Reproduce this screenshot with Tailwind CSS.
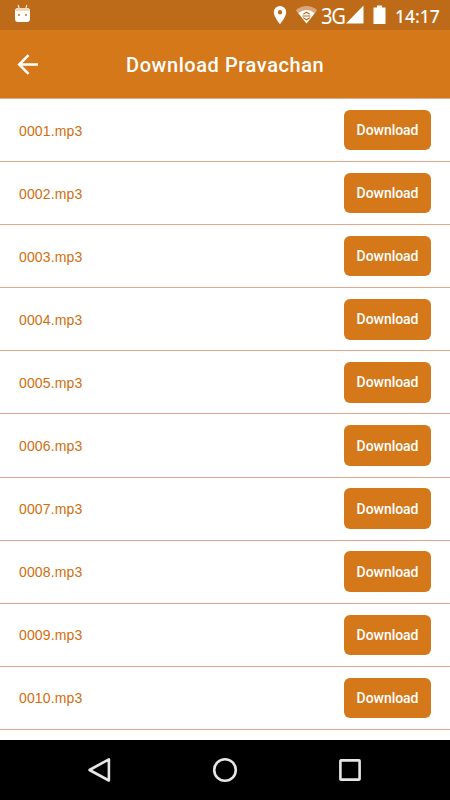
<!DOCTYPE html>
<html lang="en">
<head>
<meta charset="utf-8">
<title>Download Pravachan</title>
<script src="https://cdn.jsdelivr.net/npm/@tailwindcss/browser@4"></script>
</head>
<body class="bg-white">
<div class="flex h-[800px] w-[450px] flex-col overflow-hidden font-[Roboto,sans-serif]">
  <div class="flex h-[30px] shrink-0 items-center bg-[#bd6b18] font-['Noto_Sans',sans-serif] text-white">
    <svg class="ml-[14px] h-[30px] w-[17px]" viewBox="0 0 17 30" fill="#fff">
      <path d="M4.200 5l1 4M12.800 5l-1 4" stroke="#f7e5d5" stroke-width="1.200"/>
      <path d="M1 11Q1 8 4 8h9q3 0 3 3v8q0 3-3 3H4q-3 0-3-3z"/>
      <path d="M1.500 11Q2 8 4 8h9q2 0 2.500 3z" fill="#f3d6bd"/>
      <path d="M4 14h2v2H4zM11 14h2v2h-2z" fill="#d9945a"/>
    </svg>
    <svg class="ml-[242px] h-[30px] w-[14px]" viewBox="0 0 14 30" fill="#fff"><path fill-rule="evenodd" d="M7 6a6.200 6.200 0 0 0-6.200 6.200C.8 17 7 24 7 24s6.200-7 6.200-11.800A6.200 6.200 0 0 0 7 6zm0 4a2.200 2.200 0 1 1 0 4.400A2.200 2.200 0 0 1 7 10z"/></svg>
    <svg class="ml-[8px] h-[30px] w-[23px]" viewBox="0 0 23 30">
      <path d="M.8 10.200Q11.500 2 22.200 10.200L11.500 23.500z" fill="#d9a77a"/>
      <path d="M3.200 13Q11.500 7 19.800 13L11.500 23.500z" fill="#fff"/>
      <path d="M8.300 14.200l3.200-2 3.200 2M8.300 17.800l3.200 2 3.200-2M7.500 16h8" fill="none" stroke="#bd6b18" stroke-width="1.100"/>
    </svg>
    <span class="ml-[3px] w-[24px] origin-left scale-x-[.92] whitespace-nowrap text-[22px] leading-[28px] tracking-[-1.500px]">3G</span>
    <svg class="ml-[1px] h-[30px] w-[18px]" viewBox="0 0 18 30"><path d="M17.500 5.500v18H0z" fill="#fff"/></svg>
    <svg class="ml-[9px] h-[30px] w-[13px]" viewBox="0 0 13 30"><path d="M4 5.500h5v2h3.500v16.500H.5V7.500H4z" fill="#fff"/></svg>
    <span class="ml-[9px] mt-px text-[17.5px] leading-[28px] font-medium">14:17</span>
  </div>
  <div class="flex h-[68px] shrink-0 items-center bg-[#d5781a] text-white">
    <svg class="ml-[17px] h-[22px] w-[22px]" viewBox="0 0 22 22" fill="none" stroke="#fff" stroke-width="2.500"><path d="M21 11.500H2.500M11.500 2.200L2.200 11.500l9.300 9.300"/></svg>
    <h1 class="ml-[87px] mt-[2px] whitespace-nowrap text-[20px] leading-[28px] font-medium tracking-[.57px]">Download Pravachan</h1>
  </div>
  <div class="flex-1 overflow-hidden border-t border-[#e0ad91] bg-white" id="list"></div>
  <div class="grid h-[60px] shrink-0 grid-cols-[198px_54px_198px] items-center bg-black">
    <svg class="ml-[86px] h-[26px] w-[26px]" viewBox="0 0 26 26"><path d="M22.900 2.300v21.200L3.500 13z" fill="none" stroke="#e6e6e6" stroke-width="2.600" stroke-linejoin="round"/></svg>
    <svg class="mx-auto h-[26px] w-[26px]" viewBox="0 0 26 26"><circle cx="13" cy="13" r="10.800" fill="none" stroke="#e6e6e6" stroke-width="2.600"/></svg>
    <svg class="ml-[85px] h-[26px] w-[26px]" viewBox="0 0 26 26"><rect x="2.400" y="3.400" width="19.200" height="19.200" rx=".5" transform="translate(1 0)" fill="none" stroke="#e6e6e6" stroke-width="2.600"/></svg>
  </div>
</div>
<script>
const list = document.getElementById('list');
for (let i = 1; i <= 10; i++) {
  list.insertAdjacentHTML('beforeend', `
  <div class="flex h-[63.1px] items-center justify-between border-b border-[#e0a68e] px-[19px]">
    <span class="mt-px font-['Liberation_Sans',sans-serif] text-[14px] leading-[20px] tracking-[.15px] text-[#d26e0c]">${String(i).padStart(4, '0')}.mp3</span>
    <button class="h-[40.5px] w-[87px] rounded-[6px] bg-[#d5781a] text-center text-[14px] leading-[20px] font-medium tracking-[-.05px] text-white">Download</button>
  </div>`);
}
</script>
</body>
</html>
